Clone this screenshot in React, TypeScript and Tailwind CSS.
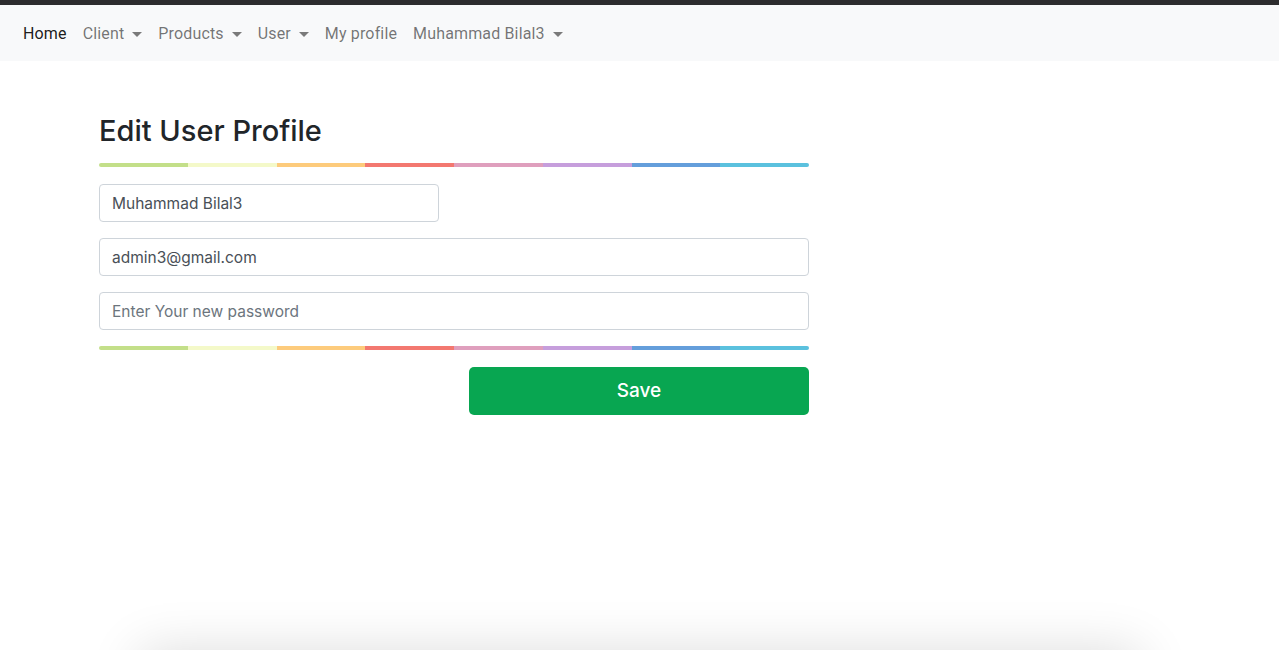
import React from "react";

const colors: string[] = [
  "bg-[#c3df89]",
  "bg-[#f4f9c9]",
  "bg-[#fdcb7c]",
  "bg-[#f37870]",
  "bg-[#df9fbd]",
  "bg-[#c69edc]",
  "bg-[#649edb]",
  "bg-[#5bc1de]",
];

const Rainbow = () => (
  <div className="flex h-[4px] w-full overflow-hidden rounded-full">
    {colors.map((c) => (
      <div key={c} className={`flex-1 ${c}`} />
    ))}
  </div>
);

const Caret = () => (
  <span className="ml-[8px] inline-block h-0 w-0 border-x-[5px] border-t-[5px] border-x-transparent border-t-[#7a7a7a] align-middle" />
);

const NavItem = ({ label, active, dropdown }: { label: string; active?: boolean; dropdown?: boolean }) => (
  <a
    className={`flex items-center px-[8px] py-[8px] text-[16px] tracking-[0.15px] ${
      active ? "text-black/90" : "text-black/55"
    }`}
  >
    {label}
    {dropdown && <Caret />}
  </a>
);

const App = () => {
  return (
    <div className="min-h-screen bg-white font-['Inter',sans-serif]">
      <div className="h-[5px] bg-[#2c2c2e]" />
      <nav className="flex h-[56px] items-center bg-[#f8f9fa] px-[15px] pt-[2px] font-['Roboto',sans-serif]">
        <NavItem label="Home" active />
        <NavItem label="Client" dropdown />
        <NavItem label="Products" dropdown />
        <NavItem label="User" dropdown />
        <NavItem label="My profile" />
        <NavItem label="Muhammad Bilal3" dropdown />
      </nav>

      <div className="ml-[99px] w-[710px] pt-[52px]">
        <h3 className="text-[29px] leading-[36px] font-medium text-[#212529]">Edit User Profile</h3>
        <div className="mt-[14px]">
          <Rainbow />
        </div>
        <div className="mt-[17px] flex flex-col gap-[16px]">
          <input
            className="h-[38px] w-[340px] rounded-[4px] border border-[#ced4da] px-[12px] text-[15.5px] text-[#495057] outline-none"
            defaultValue="Muhammad Bilal3"
          />
          <input
            className="h-[38px] w-full rounded-[4px] border border-[#ced4da] px-[12px] text-[15.5px] text-[#495057] outline-none"
            defaultValue="admin3@gmail.com"
          />
          <input
            className="h-[38px] w-full rounded-[4px] border border-[#ced4da] px-[12px] text-[15.5px] text-[#495057] placeholder:text-[#6c757d] outline-none"
            placeholder="Enter Your new password"
          />
        </div>
        <div className="mt-[16px]">
          <Rainbow />
        </div>
        <div className="mt-[17px] flex justify-end">
          <button className="h-[48px] w-[340px] rounded-[5px] bg-[#08a651] text-[19px] font-medium text-white">
            Save
          </button>
        </div>
      </div>

      <div className="mx-auto mt-[236px] h-[200px] w-[1000px] shadow-[0_0_50px_rgba(0,0,0,0.14)]" />
    </div>
  );
};

export default App;
